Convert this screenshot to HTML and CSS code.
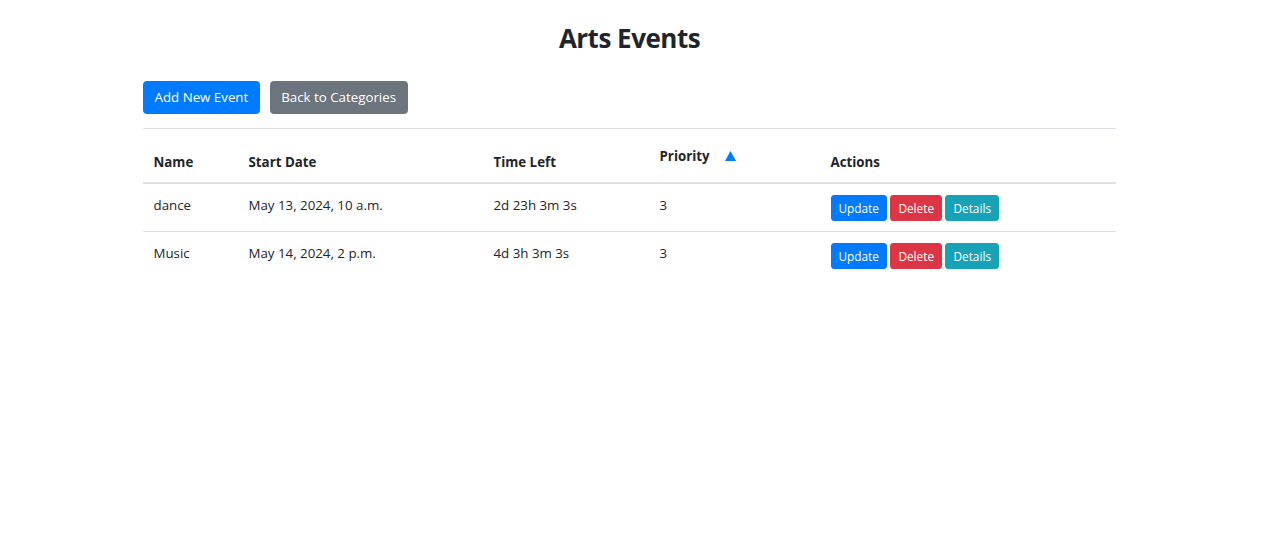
FILE: index.html
```html
<!DOCTYPE html>
<html lang="en">
<head>
<meta charset="utf-8">
<title>Arts Events</title>
<link rel="stylesheet" href="styles.css">
</head>
<body>
<div class="container">
  <h2 class="title">Arts Events</h2>
  <div class="toolbar">
    <a class="btn btn-primary" href="#">Add New Event</a>
    <a class="btn btn-secondary" href="#">Back to Categories</a>
  </div>
  <table class="table">
    <thead>
      <tr>
        <th class="c-name">Name</th>
        <th class="c-start">Start Date</th>
        <th class="c-time">Time Left</th>
        <th class="c-prio">Priority <button class="btn btn-link sort" type="button"><svg width="11" height="10" viewBox="0 0 11 10"><path d="M5.5 0L11 10H0z" fill="#007bff"/></svg></button></th>
        <th class="c-actions">Actions</th>
      </tr>
    </thead>
    <tbody>
      <tr>
        <td>dance</td>
        <td>May 13, 2024, 10 a.m.</td>
        <td>2d 23h 3m 3s</td>
        <td>3</td>
        <td><a class="btn btn-sm btn-primary" href="#">Update</a> <a class="btn btn-sm btn-danger" href="#">Delete</a> <a class="btn btn-sm btn-info" href="#">Details</a></td>
      </tr>
      <tr>
        <td>Music</td>
        <td>May 14, 2024, 2 p.m.</td>
        <td>4d 3h 3m 3s</td>
        <td>3</td>
        <td><a class="btn btn-sm btn-primary" href="#">Update</a> <a class="btn btn-sm btn-danger" href="#">Delete</a> <a class="btn btn-sm btn-info" href="#">Details</a></td>
      </tr>
    </tbody>
  </table>
</div>
</body>
</html>
```

FILE: styles.css
```css
* { box-sizing: border-box; }
body {
  margin: 0;
  font-family: "Segoe UI", "Open Sans", "Noto Sans", sans-serif;
  font-size: 13.3px;
  line-height: 21px;
  color: #212529;
  background: #fff;
}
.container {
  width: 973px;
  margin-left: 143px;
  padding-top: 21px;
}
.title {
  margin: 0 0 26px;
  font-size: 26px;
  letter-spacing: -0.5px;
  line-height: 34px;
  font-weight: 700;
  text-align: center;
}
.toolbar {
  display: flex;
  gap: 10px;
  margin-bottom: 14px;
}
.btn {
  display: inline-block;
  font-family: inherit;
  font-weight: 400;
  font-size: 13.3px;
  line-height: 21px;
  padding: 5px 10.5px;
  border: 1px solid transparent;
  border-radius: 3.5px;
  text-decoration: none;
  color: #fff;
  vertical-align: middle;
  cursor: pointer;
}
.btn-primary { background: #007bff; border-color: #007bff; }
.btn-secondary { background: #6c757d; border-color: #6c757d; }
.btn-danger { background: #dc3545; border-color: #dc3545; }
.btn-info { background: #17a2b8; border-color: #17a2b8; }
.btn-sm {
  font-size: 11.8px;
  line-height: 18px;
  padding: 3px 7px;
  border-radius: 3px;
}
.btn-link {
  background: transparent;
  color: #007bff;
}
.sort {
  vertical-align: baseline;
  line-height: 21px;
  padding: 4.5px 10.5px 4.5px 11px;
}
.sort svg { display: inline-block; vertical-align: -1px; }
.table {
  width: 100%;
  border-collapse: collapse;
}
.table th, .table td {
  padding: 10.5px;
  border-top: 1px solid #dee2e6;
  text-align: left;
}
.table th {
  vertical-align: bottom;
  font-weight: 700;
  padding-bottom: 9px;
  border-bottom: 2px solid #dee2e6;
}
.table th.c-prio { padding-bottom: 10.5px; }
.table td { vertical-align: top; }
.c-name { width: 95px; }
.c-start { width: 245px; }
.c-time { width: 166px; }
.c-prio { width: 171px; }
```
